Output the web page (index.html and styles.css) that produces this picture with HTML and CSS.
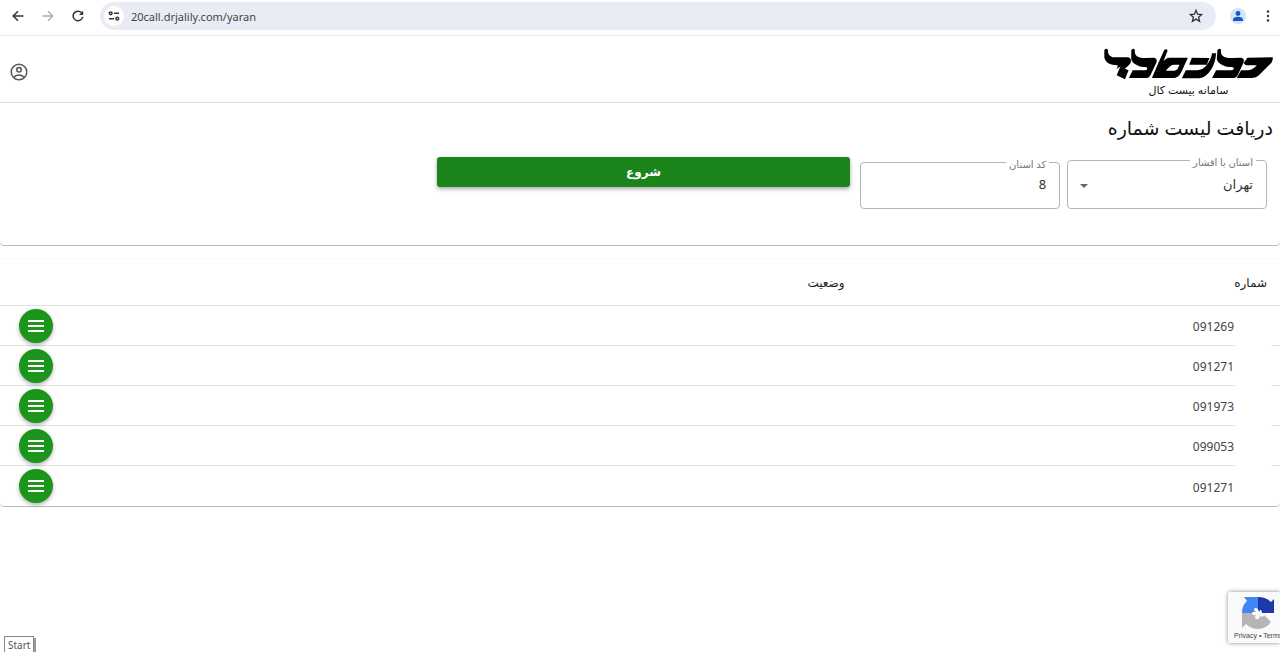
FILE: index.html
```html
<!DOCTYPE html>
<html lang="fa" dir="rtl">
<head>
<meta charset="utf-8">
<meta name="viewport" content="width=device-width, initial-scale=1">
<title>سامانه بیست کال</title>
<link rel="stylesheet" href="styles.css">
</head>
<body>
<svg class="sprite" aria-hidden="true">
  <symbol id="menu" viewBox="0 0 16 12"><path d="M0 1h16M0 6h16M0 11h16" stroke="#fff" stroke-width="2"/></symbol>
</svg>

<nav class="browser" dir="ltr">
  <button class="tool" aria-label="Back"><svg width="12" height="12" viewBox="0 0 12 12"><path d="M11.500 6H1.500M6 1.200 1.200 6 6 10.800" fill="none" stroke="#333" stroke-width="1.500"/></svg></button>
  <button class="tool" aria-label="Forward"><svg width="12" height="12" viewBox="0 0 12 12"><path d="M.5 6h10M6 1.200 10.800 6 6 10.800" fill="none" stroke="#aaa" stroke-width="1.300"/></svg></button>
  <button class="tool" aria-label="Reload"><svg width="12" height="12" viewBox="0 0 12 12"><path d="M10.700 6.800A4.800 4.800 0 1 1 9.700 2.900" fill="none" stroke="#333" stroke-width="1.500"/><path d="M11.200.8v4.200H7z" fill="#333"/></svg></button>
  <div class="address">
    <button class="site" aria-label="Site information"><svg width="12" height="10" viewBox="0 0 12 10" fill="none" stroke="#333" stroke-width="1.500"><circle cx="2.700" cy="2.300" r="1.400"/><path d="M6 2.300h5M1 7.700h5"/><circle cx="9.300" cy="7.700" r="1.400"/></svg></button>
    <input class="url" aria-label="Address" value="20call.drjalily.com/yaran">
    <button class="star" aria-label="Bookmark"><svg width="14" height="14" viewBox="0 0 14 14"><path d="m7 1.300 1.600 3.900 4.200.3-3.200 2.700 1 4.100L7 10.100l-3.600 2.200 1-4.100L1.200 5.500l4.200-.3z" fill="none" stroke="#333" stroke-width="1.300"/></svg></button>
  </div>
  <button class="profile" aria-label="Profile"><svg width="10" height="10" viewBox="0 0 10 10" fill="#1558c4"><circle cx="5" cy="2.500" r="2.400"/><path d="M0 10V8.300C0 6.600 2.600 5.700 5 5.700s5 .9 5 2.600V10z"/></svg></button>
  <button class="more" aria-label="More"><svg width="4" height="12" viewBox="0 0 4 12" fill="#333"><circle cx="2" cy="1.500" r="1.200"/><circle cx="2" cy="6" r="1.200"/><circle cx="2" cy="10.500" r="1.200"/></svg></button>
</nav>

<header class="header">
  <a class="brand" href="#">
    <svg class="logo" viewBox="70 146 514 96" role="img" aria-label="حیات طیبه">
      <path d="M74 152q7-7 11 0-2 16 14 22h46q10 2 9 13-1 7-10 14l-10 9-12-8-12 7q6-9 3-11l-15-2q-20-5-24-21z"/>
      <path d="m122 202 25 11-11 27-25-12z"/>
      <path d="M155 152q8-7 11 0-3 14 10 21 8 4 20 3l28-1q10 2 7 14l-18 38q-4 9-13 9h-52l11-23h37q6 0 7-5 1-5-8-5-14 1-22-5-16-6-18-18z"/>
      <path fill-rule="evenodd" d="M254 152q8-5 10 2l-12 31 7-6q5-4 12-4h54l-19 42q-9 19-25 19h-64l18-42zm27 44q-9 2-22 18h24q9 0 13-9l4-9z"/>
      <path d="m337 175 53 1-8 20h-53zM398 162h12q-2 28-14 47-16 26-37 28h-52l12-24h34q19-1 28-15 12-13 17-36z"/>
      <path d="M414 152q8-7 11 0-3 14 10 21 8 4 22 3l28-1q11 2 8 14l-18 38q-4 9-13 9h-64l12-23h46q6 0 7-5 1-5-8-5-16 1-25-5-15-6-18-18z"/>
      <path d="m504 175 76-1q3 13-13 25l-27 27q-10 10-24 10h-44l13-23h22q14-1 25-15h-30q-7-1-9-7z"/>
    </svg>
    <span class="tagline">سامانه بیست کال</span>
  </a>
  <button class="account" aria-label="حساب کاربری"><svg width="18" height="18" viewBox="0 0 18 18" fill="none" stroke="#555" stroke-width="1.500"><circle cx="9" cy="9" r="7.800"/><circle cx="9" cy="6.800" r="2.300"/><path d="M3.500 14.300q5.500-4.400 11 0"/></svg></button>
</header>

<main>
  <section class="panel">
    <h1 class="title">دریافت لیست شماره</h1>
    <form class="form">
      <div class="fields">
        <div class="field">
          <label class="label" for="province">استان یا اقشار</label>
          <select class="control select" id="province"><option>تهران</option></select>
          <svg class="arrow" width="8" height="4" viewBox="0 0 8 4"><path d="M0 0h8L4 4z" fill="#666"/></svg>
        </div>
        <div class="field short">
          <label class="label" for="code">کد استان</label>
          <input class="control" id="code" value="8">
        </div>
      </div>
      <div class="action"><button class="start" type="button">شروع</button></div>
    </form>
  </section>

  <section class="results">
    <table class="table">
      <thead><tr><th class="number-col">شماره</th><th class="status-col">وضعیت</th><th></th></tr></thead>
      <tbody>
        <tr><td class="number">091269</td><td></td><td><button class="menu" aria-label="منو"><svg width="16" height="12"><use href="#menu"/></svg></button></td></tr>
        <tr><td class="number">091271</td><td></td><td><button class="menu" aria-label="منو"><svg width="16" height="12"><use href="#menu"/></svg></button></td></tr>
        <tr><td class="number">091973</td><td></td><td><button class="menu" aria-label="منو"><svg width="16" height="12"><use href="#menu"/></svg></button></td></tr>
        <tr><td class="number">099053</td><td></td><td><button class="menu" aria-label="منو"><svg width="16" height="12"><use href="#menu"/></svg></button></td></tr>
        <tr><td class="number">091271</td><td></td><td><button class="menu" aria-label="منو"><svg width="16" height="12"><use href="#menu"/></svg></button></td></tr>
      </tbody>
    </table>
  </section>
</main>

<aside class="captcha" dir="ltr">
  <svg class="captcha-logo" width="32" height="32" viewBox="0 0 32 32">
    <path d="M16 0q8 0 13 5l3-3v14H20q0-3-2-3l-1 2-1-3z" fill="#1c3aa9"/>
    <path d="M0 16Q0 8 5 4L2 0h14v12q-3-2-4 0 0 2 2 3-4-1-4 1z" fill="#4285f4"/>
    <path d="M0 16h10q0 3 4 2-2 3 0 4 3 1 4-3 3 2 4-1l7 7q-5 7-13 7-7 0-12-5l-4 4z" fill="#b5b5b5"/>
  </svg>
  <span class="captcha-text">Privacy • Terms</span>
</aside>
<div class="tooltip" dir="ltr">Start</div>
</body>
</html>
```
FILE: styles.css
```css
* { box-sizing: border-box; }
body {
  margin: 0;
  min-height: 100vh;
  position: relative;
  overflow: hidden;
  background: #fff;
  color: #222;
  font-family: "Noto Sans", "DejaVu Sans", sans-serif;
  font-size: 12px;
}
button {
  display: flex;
  align-items: center;
  justify-content: center;
  padding: 0;
  border: 0;
  background: none;
  font-family: inherit;
}
svg { display: block; flex: none; }
.sprite { position: absolute; width: 0; height: 0; }

.browser {
  display: flex;
  align-items: center;
  height: 36px;
  padding: 0 4px 3px 3px;
  border-bottom: 1px solid #e8e8e8;
}
.tool { width: 30px; height: 28px; }
.address {
  flex: 1;
  display: flex;
  align-items: center;
  height: 28px;
  margin-left: 7px;
  padding: 0 13px 0 4px;
  border-radius: 14px;
  background: #e9ecf7;
}
.site { width: 20px; height: 20px; border-radius: 50%; background: #fff; }
.url {
  flex: 1;
  min-width: 0;
  padding: 0 7px;
  border: 0;
  background: none;
  color: #444;
  font: 11px "Noto Sans", sans-serif;
}
.profile { width: 16px; height: 16px; margin-left: 14px; border-radius: 50%; background: #d3e3fd; }
.more { width: 16px; height: 20px; margin-left: 14px; }

.header {
  display: flex;
  align-items: center;
  justify-content: space-between;
  height: 67px;
  padding: 6px 6px 0 10px;
  border-bottom: 1px solid #dcdcdc;
}
.brand {
  display: flex;
  flex-direction: column;
  align-items: center;
  color: #111;
  text-decoration: none;
}
.logo { width: 171px; height: 32px; margin-top: 4px; }
.tagline { font-size: 11px; line-height: 20px; }
.account { width: 18px; height: 18px; }

.panel {
  height: 143px;
  padding-top: 12px;
  border-bottom: 1px solid #bbb;
  border-radius: 4px;
}
.title {
  margin: 0;
  padding: 0 7px;
  color: #111;
  font-size: 19px;
  font-weight: 400;
  line-height: 26px;
}
.form { display: grid; grid-template-columns: repeat(3, 1fr); padding-top: 16px; }
.fields {
  display: flex;
  align-items: flex-end;
  gap: 7px;
  padding: 3px 13px 0 7px;
}
.field {
  position: relative;
  flex: 1;
  height: 49px;
  border: 1px solid #b5b5b5;
  border-radius: 4px;
}
.short { height: 47px; }
.label {
  position: absolute;
  top: -6px;
  right: 10px;
  padding: 0 3px;
  background: #fff;
  color: #777;
  font-size: 10px;
  line-height: 14px;
}
.control {
  width: 100%;
  height: 100%;
  padding: 0 13px 2px;
  border: 0;
  background: none;
  appearance: none;
  color: #333;
  font: 13px "Noto Sans", "DejaVu Sans", sans-serif;
}
.short .control { padding-bottom: 4px; }
.arrow { position: absolute; top: 23px; left: 12px; }
.action { padding: 0 3px 0 10px; }
.start {
  width: 100%;
  height: 30px;
  padding-bottom: 2px;
  border-radius: 3px;
  background: #1b851b;
  box-shadow: 0 2px 4px rgba(0, 0, 0, .35);
  color: #fff;
  font-size: 12px;
  font-weight: 700;
}

.results {
  margin-top: 12px;
  border-top: 1px solid #f8f8f8;
  border-bottom: 1px solid #bbb;
  border-radius: 4px;
}
.table { width: 100%; border-collapse: separate; border-spacing: 0; table-layout: fixed; }
th {
  height: 47px;
  padding: 0 13px;
  border-bottom: 1px solid #e2e2e2;
  font-size: 12px;
  font-weight: 400;
  text-align: right;
}
.number-col, .status-col { width: 33%; }
td { height: 40px; padding: 0; border-bottom: 1px solid #e2e2e2; }
tbody tr:last-child td { border-bottom: 0; }
.number { position: relative; padding: 2px 46px 0 0; color: #444; }
.number::after {
  content: "";
  position: absolute;
  top: 0;
  right: 9px;
  bottom: -1px;
  width: 36px;
  background: #fff;
}
tbody tr:last-child .number::after { bottom: 0; }
.menu {
  width: 34px;
  height: 34px;
  margin: 0 auto 0 19px;
  border-radius: 50%;
  background: #1b951b;
  box-shadow: 0 2px 4px rgba(0, 0, 0, .3);
}

.captcha {
  position: absolute;
  right: 0;
  bottom: 9px;
  width: 52px;
  height: 51px;
  padding-top: 5px;
  overflow: hidden;
  border-radius: 2px 0 0 2px;
  background: #fafafa;
  box-shadow: 0 0 4px #888;
}
.captcha-logo { margin-left: 14px; }
.captcha-text {
  display: block;
  padding-left: 6px;
  color: #444;
  font: 7px/14px "Liberation Sans", sans-serif;
  white-space: nowrap;
}
.tooltip {
  position: absolute;
  left: 4px;
  bottom: -2px;
  height: 18px;
  padding: 0 3px;
  border: 1px solid #888;
  box-shadow: 2px 2px 0 #999;
  background: #fff;
  color: #555;
  font-size: 10px;
  line-height: 16px;
}
```
